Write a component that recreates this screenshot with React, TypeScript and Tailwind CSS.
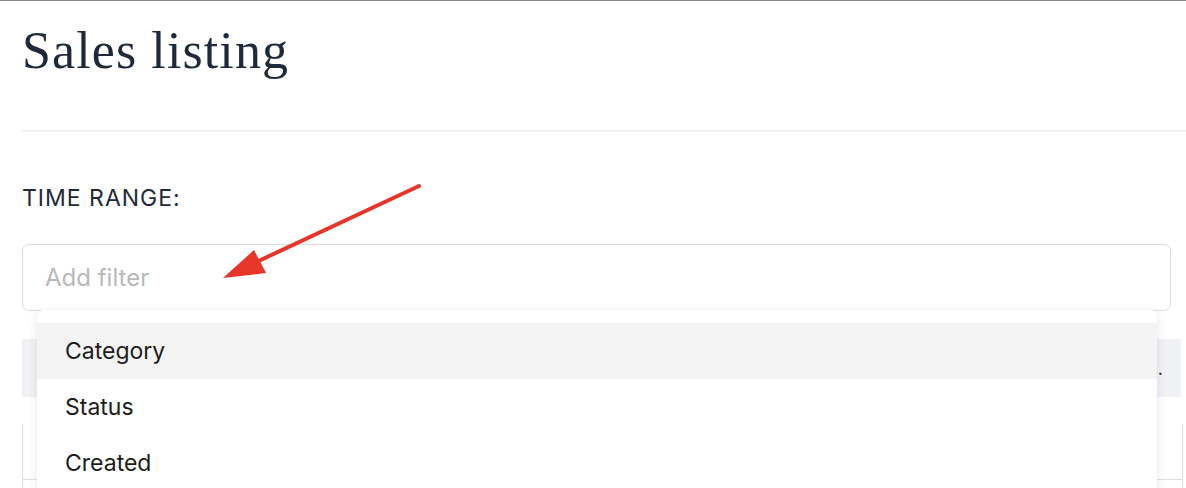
const items = ["Category", "Status", "Created"];

function Arrow() {
  return (
    <svg
      className="absolute left-0 top-0 pointer-events-none"
      width="1186"
      height="488"
      viewBox="0 0 1186 488"
    >
      <line x1="419" y1="185" x2="250" y2="264" stroke="#e8352a" strokeWidth="4" strokeLinecap="round" />
      <polygon points="223,277 254,249 266,272" fill="#e8352a" />
    </svg>
  );
}

export default function App() {
  return (
    <div
      className="relative w-[1186px] h-[488px] overflow-hidden bg-white border-t border-[#8a8a8a]"
      style={{ fontFamily: "Inter, 'Liberation Sans', sans-serif" }}
    >
      <div className="pl-[22px]">
        <h1
          className="pt-[20px] text-[52px] leading-[60px] text-[#1e293b] tracking-[1.1px]"
          style={{ fontFamily: "'Liberation Serif', serif" }}
        >
          Sales listing
        </h1>
        <div className="mt-[49px] h-[2px] bg-[#f2f2f2]" />

        <div className="mt-[54px] text-[23px] leading-[24px] text-[#1f2937] tracking-[1px]">
          TIME RANGE:
        </div>

        <div className="relative mt-[34px] mr-[15px]">
          <div className="h-[67px] rounded-[7px] border-[1.5px] border-[#dcdcdc] flex items-center px-[22px]">
            <span className="text-[24px] text-[#b9b9b9]">Add filter</span>
          </div>

          <div className="absolute z-10 left-[15px] right-[14px] top-[66px] h-[200px] bg-white rounded-t-[6px] shadow-[0_2px_10px_rgba(0,0,0,0.10)] pt-[13px]">
            {items.map((it, i) => (
              <div
                key={it}
                className={
                  "h-[56px] flex items-center px-[28px] text-[23px] text-[#1c1c1c] " +
                  (i === 0 ? "bg-[#f4f4f4]" : "")
                }
              >
                {it}
              </div>
            ))}
          </div>
        </div>

        {/* table behind the menu */}
        <div className="mt-[28px] mr-[5px] h-[58px] bg-[#eff1f4] flex items-center justify-end pr-[18px]">
          <span className="text-[18px] text-[#222]">.</span>
        </div>
        <div className="mt-[27px] mr-[3px] h-[70px] border-l border-r border-[#dedede]">
          <div className="h-[56px] border-b border-[#dedede]" />
        </div>
      </div>
      <Arrow />
    </div>
  );
}
